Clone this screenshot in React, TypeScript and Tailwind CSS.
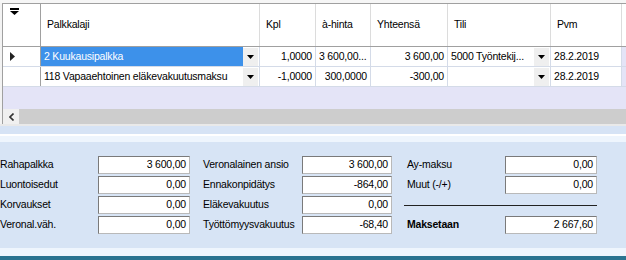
import React from "react";

const cols = [
  { key: "laji", title: "Palkkalaji", w: "w-[219px]" },
  { key: "kpl", title: "Kpl", w: "w-[56px]" },
  { key: "hinta", title: "à-hinta", w: "w-[55px]" },
  { key: "yht", title: "Yhteensä", w: "w-[77px]" },
  { key: "tili", title: "Tili", w: "w-[103px]" },
  { key: "pvm", title: "Pvm", w: "w-[71px]" },
];

function DropBtn() {
  return (
    <div className="w-[15px] h-[18px] bg-[#efefef] flex items-center justify-center shrink-0">
      <svg width="7" height="4" viewBox="0 0 7 4">
        <path d="M0 0 H7 L3.5 4 Z" fill="#000" />
      </svg>
    </div>
  );
}

function ComboCell({ text, w, selected }: { text: string; w: string; selected?: boolean }) {
  return (
    <div
      className={`${w} h-full flex items-center border-r border-[#d4dbe8] ${selected ? "bg-[#3d91ea] text-white" : ""}`}
    >
      <span className="flex-1 pl-[3px] whitespace-nowrap overflow-hidden">{text}</span>
      <div className="bg-white h-full flex items-center pr-[1px]">
        <DropBtn />
      </div>
    </div>
  );
}

function Cell({ text, w, right }: { text: string; w: string; right?: boolean }) {
  return (
    <div
      className={`${w} h-full flex items-center border-r border-[#d4dbe8] px-[3px] whitespace-nowrap overflow-hidden ${right ? "justify-end" : ""}`}
    >
      {text}
    </div>
  );
}

function Field({ label, value, bold }: { label: string; value: string; bold?: boolean }) {
  return (
    <>
      <div className={`flex items-center whitespace-nowrap ${bold ? "font-bold" : ""}`}>{label}</div>
      <div className="h-[18px] bg-white border border-[#7a7a7a] border-r-[#b9b9b9] border-b-[#b9b9b9] flex items-center justify-end pr-[3px]">
        {value}
      </div>
    </>
  );
}

export default function App() {
  return (
    <div
      className="w-[626px] h-[260px] overflow-hidden bg-[#f3f3f3] text-[10.5px] tracking-[-0.2px] text-black flex flex-col"
      style={{ fontFamily: '"Liberation Sans", Arial, sans-serif' }}
    >
      {/* grid */}
      <div className="h-[3px] bg-[#f6f6f6]" />
      <div className="ml-[2px] h-[121px] flex flex-col border-t border-l border-[#a0a0a0] bg-[#e4e4f7]">
        {/* header */}
        <div className="h-[43px] flex bg-white border-b border-[#a0a0a0]">
          <div className="w-[38px] border-r border-[#a0a0a0] pt-[4px] pl-[7px]">
            <svg width="9" height="7" viewBox="0 0 9 7">
              <rect x="0" y="0" width="9" height="2" fill="#000" />
              <path d="M0 3 H9 L4.5 7 Z" fill="#000" />
            </svg>
          </div>
          {cols.map((c) => (
            <div key={c.key} className={`${c.w} border-r border-[#dcdcdc] flex items-center pl-[6px]`}>
              {c.title}
            </div>
          ))}
          <div className="flex-1" />
        </div>

        {/* rows */}
        <div className="h-[20px] flex bg-white border-b border-[#d4dbe8]">
          <div className="w-[38px] border-r border-[#a0a0a0] flex items-center pl-[7px]">
            <svg width="5" height="9" viewBox="0 0 5 9">
              <path d="M0 0 L5 4.5 L0 9 Z" fill="#222" />
            </svg>
          </div>
          <ComboCell text="2 Kuukausipalkka" w="w-[219px]" selected />
          <Cell text="1,0000" w="w-[56px]" right />
          <Cell text="3 600,00..." w="w-[55px]" />
          <Cell text="3 600,00" w="w-[77px]" right />
          <ComboCell text="5000 Työntekij..." w="w-[103px]" />
          <Cell text="28.2.2019" w="w-[71px]" />
          <div className="flex-1 bg-[#e4e4f7]" />
        </div>
        <div className="h-[20px] flex bg-white border-b border-[#d4dbe8]">
          <div className="w-[38px] border-r border-[#a0a0a0]" />
          <ComboCell text="118 Vapaaehtoinen eläkevakuutusmaksu" w="w-[219px]" />
          <Cell text="-1,0000" w="w-[56px]" right />
          <Cell text="300,0000" w="w-[55px]" right />
          <Cell text="-300,00" w="w-[77px]" right />
          <ComboCell text="" w="w-[103px]" />
          <Cell text="28.2.2019" w="w-[71px]" />
          <div className="flex-1 bg-[#e4e4f7]" />
        </div>
        <div className="flex-1" />

        {/* horizontal scrollbar */}
        <div className="h-[15px] flex bg-[#f0f0f0]">
          <div className="w-[16px] flex items-center justify-center">
            <svg width="5" height="8" viewBox="0 0 5 8">
              <path d="M4.5 0.5 L1 4 L4.5 7.5" stroke="#333" strokeWidth="1.6" fill="none" />
            </svg>
          </div>
          <div className="flex-1 bg-[#cdcdcd]" />
        </div>
      </div>

      {/* separators */}
      <div className="h-[2px] bg-[#e9e9e9]" />
      <div className="h-[8px] bg-[#d6e3f5]" />
      <div className="h-[2px] bg-white" />
      <div className="h-[6px] bg-[#eef5fd]" />

      {/* summary panel */}
      <div className="h-[106px] bg-[#d7e4f5] pt-[13px]">
        <div className="grid grid-cols-[98px_92px_13px_99px_90px_15px_98px_92px] auto-rows-[20px] items-center">
          <Field label="Rahapalkka" value="3 600,00" />
          <div />
          <Field label="Veronalainen ansio" value="3 600,00" />
          <div />
          <Field label="Ay-maksu" value="0,00" />

          <Field label="Luontoisedut" value="0,00" />
          <div />
          <Field label="Ennakonpidätys" value="-864,00" />
          <div />
          <Field label="Muut (-/+)" value="0,00" />

          <Field label="Korvaukset" value="0,00" />
          <div />
          <Field label="Eläkevakuutus" value="0,00" />
          <div />
          <div className="col-span-2 h-[1px] bg-[#222] ml-[-3px]" />

          <Field label="Veronal.väh." value="0,00" />
          <div />
          <Field label="Työttömyysvakuutus" value="-68,40" />
          <div />
          <Field label="Maksetaan" value="2 667,60" bold />
        </div>
      </div>
      <div className="h-[8px] bg-[#eef5fd]" />
      <div className="flex-1 bg-[#2a7390]" />
    </div>
  );
}
